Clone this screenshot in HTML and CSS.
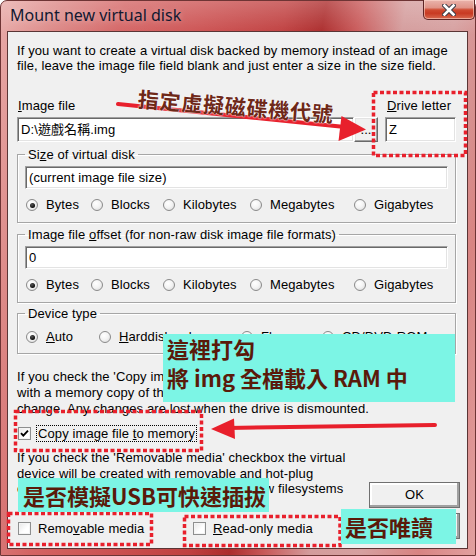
FILE: index.html
```html
<!DOCTYPE html>
<html>
<head>
<meta charset="utf-8">
<link rel="stylesheet" href="styles.css">
</head>
<body>
<div class="window">
  <div class="titlebar">
    <span class="title">Mount new virtual disk</span>
    <div class="close">
      <svg width="14" height="12" viewBox="0 0 14 12">
        <path d="M2.5 1.5 L11.5 10.5 M11.5 1.5 L2.5 10.5" stroke="#3c3c46" stroke-width="4.6" stroke-linecap="square" fill="none"/>
        <path d="M2.5 1.5 L11.5 10.5 M11.5 1.5 L2.5 10.5" stroke="#ffffff" stroke-width="2.6" stroke-linecap="square" fill="none"/>
      </svg>
    </div>
  </div>
  <div class="client">
    <p class="intro">If you want to create a virtual disk backed by memory instead of an image<br>file, leave the image file field blank and just enter a size in the size field.</p>

    <div class="file-row">
      <div class="file-col">
        <div class="lbl"><u>I</u>mage file</div>
        <div class="file-input">
          <div class="edit file-edit">D:\遊戲名稱.img</div>
          <div class="btn browse">...</div>
        </div>
      </div>
      <div class="drive-col">
        <div class="lbl drive-lbl"><u>D</u>rive letter</div>
        <div class="edit drive-edit">Z</div>
      </div>
    </div>

    <fieldset class="group size-group">
      <legend>Si<u>z</u>e of virtual disk</legend>
      <div class="edit wide">(current image file size)</div>
      <div class="radios units">
        <div class="radio on"><span class="dot"></span>Bytes</div>
        <div class="radio"><span class="dot"></span>Blocks</div>
        <div class="radio"><span class="dot"></span>Kilobytes</div>
        <div class="radio"><span class="dot"></span>Megabytes</div>
        <div class="radio"><span class="dot"></span>Gigabytes</div>
      </div>
    </fieldset>

    <fieldset class="group offset-group">
      <legend>Image file <u>o</u>ffset (for non-raw disk image file formats)</legend>
      <div class="edit wide">0</div>
      <div class="radios units">
        <div class="radio on"><span class="dot"></span>Bytes</div>
        <div class="radio"><span class="dot"></span>Blocks</div>
        <div class="radio"><span class="dot"></span>Kilobytes</div>
        <div class="radio"><span class="dot"></span>Megabytes</div>
        <div class="radio"><span class="dot"></span>Gigabytes</div>
      </div>
    </fieldset>

    <fieldset class="group device-group">
      <legend>Device type</legend>
      <div class="radios devices">
        <div class="radio on"><span class="dot"></span><span><u>A</u>uto</span></div>
        <div class="radio"><span class="dot"></span><span><u>H</u>arddisk volume</span></div>
        <div class="radio"><span class="dot"></span><span>Floppy</span></div>
        <div class="radio"><span class="dot"></span><span>CD/DVD-ROM</span></div>
      </div>
    </fieldset>

    <p class="note">If you check the 'Copy image file to memory' checkbox the drive is created<br>with a memory copy of the image file contents. The image file will not<br>change. Any changes are lost when the drive is dismounted.</p>

    <div class="check-row">
      <span class="box checked">
        <svg width="11" height="11" viewBox="0 0 11 11"><path d="M2 5.2 L4.3 7.6 L9 2.6" stroke="#000" stroke-width="1.9" fill="none"/></svg>
      </span>
      <span class="focus">Copy image file <u>t</u>o memory</span>
    </div>

    <div class="bottom">
      <div class="bottom-left">
        <p class="note2">If you check the 'Removable media' checkbox the virtual<br>device will be created with removable and hot-plug<br>characteristics that is required by some new filesystems</p>
        <div class="checks">
          <div class="check"><span class="box"></span><span>Remo<u>v</u>able media</span></div>
          <div class="check"><span class="box"></span><span><u>R</u>ead-only media</span></div>
        </div>
      </div>
      <div class="buttons">
        <div class="btn push">OK</div>
        <div class="btn push">Cancel</div>
      </div>
    </div>
  </div>

  <svg class="marks" width="476" height="556" viewBox="0 0 476 556">
    <g fill="none" stroke="#e8202c" stroke-width="3.5" stroke-dasharray="4 2.5">
      <rect x="373.5" y="92.5" width="92" height="63"/>
      <rect x="15.5" y="411.5" width="186" height="39"/>
      <rect x="8.5" y="513.5" width="143" height="31"/>
      <rect x="184.5" y="516.5" width="155.5" height="29"/>
    </g>
    <g stroke="#e8202c" stroke-width="4" stroke-linecap="round" fill="#e8202c">
      <line x1="118" y1="104" x2="345" y2="127"/>
      <polygon points="366,129.5 341.5,116 338.5,141" stroke="none"/>
      <line x1="435" y1="425" x2="228" y2="428"/>
      <polygon points="211,429 234,418.5 235,439" stroke="none"/>
    </g>
  </svg>

  <div class="note-top">指定虛擬磁碟機代號</div>
  <div class="tag tag-copy">這裡打勾<br>將 img 全檔載入 RAM 中</div>
  <div class="tag tag-usb">是否模擬USB可快速插拔</div>
  <div class="tag tag-ro">是否唯讀</div>
</div>
</body>
</html>
```

FILE: styles.css
```css
html, body {
  margin: 0;
  padding: 0;
}
body {
  width: 476px;
  height: 556px;
  overflow: hidden;
  font-family: "Liberation Sans", Arial, "Noto Sans CJK TC", sans-serif;
  font-size: 13px;
  letter-spacing: 0.1px;
  color: #000;
  background: #ffffff;
}
.window {
  position: relative;
  width: 476px;
  height: 556px;
  box-sizing: border-box;
  border: 1px solid #6e3434;
  border-radius: 7px 7px 0 0;
  padding: 0 7px 6px 6px;
  background:
    linear-gradient(to bottom, rgba(255,255,255,0.22), rgba(255,255,255,0) 34px),
    linear-gradient(100deg, #e8aaa8 0%, #dc8886 10%, #d46464 22%, #cc5252 36%, #c04040 50%, #ac2c2c 57%, #c85858 63%, #d49c9c 71%, #d6a0a0 80%, #d88482 90%, #e2a0a0 100%);
}
.titlebar {
  height: 30px;
  display: flex;
  align-items: flex-start;
  justify-content: space-between;
}
.title {
  font-family: "Noto Sans", "Liberation Sans", sans-serif;
  font-size: 16px;
  letter-spacing: 0;
  color: #121830;
  padding: 4px 0 0 3px;
  line-height: 20px;
  text-shadow: 0 0 6px rgba(255,255,255,0.35);
}
.close {
  width: 52px;
  height: 20px;
  margin-top: -1px;
  margin-right: -7px;
  box-sizing: border-box;
  border: 1px solid #5e2626;
  border-top: none;
  border-radius: 0 0 5px 5px;
  background: linear-gradient(to bottom, #eab4ac 0%, #e09488 40%, #cf4a30 52%, #c83a22 70%, #d86a50 100%);
  box-shadow: inset 0 0 0 1px rgba(255,220,210,0.55);
  display: flex;
  align-items: center;
  justify-content: center;
}
.client {
  height: 518px;
  box-sizing: border-box;
  background: #f0f0f0;
  border: 1px solid #5a3535;
  padding: 11px 11px 0 9px;
}
.intro {
  margin: 0;
  line-height: 15px;
  white-space: nowrap;
}
u {
  text-decoration: underline;
  text-underline-offset: 1px;
}
.file-row {
  display: flex;
  gap: 7px;
  margin-top: 25px;
}
.file-col {
  width: 361px;
}
.drive-col {
  width: 71px;
}
.lbl {
  line-height: 15px;
  padding-left: 1px;
}
.drive-lbl {
  padding-left: 2px;
}
.file-input {
  display: flex;
  margin-top: 4px;
}
.edit {
  box-sizing: border-box;
  height: 25px;
  background: #fff;
  border: 1px solid;
  border-color: #a0a0a0 #ffffff #ffffff #a0a0a0;
  box-shadow: inset 1px 1px 0 #696969, inset -1px -1px 0 #e3e3e3;
  padding: 0 3px;
  line-height: 23px;
  white-space: nowrap;
  overflow: hidden;
}
.file-edit {
  flex: 1;
}
.drive-edit {
  margin-top: 4px;
}
.btn {
  box-sizing: border-box;
  background: #f0f0f0;
  border: 1px solid;
  border-color: #ffffff #696969 #696969 #ffffff;
  box-shadow: inset -1px -1px 0 #a0a0a0, inset 1px 1px 0 #e3e3e3;
  text-align: center;
}
.browse {
  width: 24px;
  height: 25px;
  line-height: 23px;
}
.group {
  margin: 0;
  border: 1px solid #a6a6a6;
  box-shadow: inset 1px 1px 0 #fff, 1px 1px 0 #fff;
  padding: 4px 7px 9px 7px;
  min-width: 0;
}
.group legend {
  padding: 0 3px;
  line-height: 15px;
}
.size-group {
  margin-top: 5px;
}
.offset-group {
  margin-top: 4px;
}
.device-group {
  margin-top: 3px;
  padding: 8px 7px 8px 7px;
}
.wide {
  height: 23px;
  line-height: 21px;
}
.radios {
  display: grid;
  align-items: center;
  height: 16px;
  padding-left: 1px;
}
.units {
  margin-top: 8px;
  grid-template-columns: 65px 72px 87px 104px auto;
}
.devices {
  grid-template-columns: 73px 142px 81px auto;
}
.radio {
  display: flex;
  align-items: center;
  line-height: 16px;
  white-space: nowrap;
}
.dot {
  position: relative;
  flex: none;
  width: 12px;
  height: 12px;
  box-sizing: border-box;
  border-radius: 50%;
  border: 1px solid #8a8a8a;
  background: radial-gradient(circle at 40% 35%, #ffffff 0%, #f4f4f4 45%, #d8d8d8 100%);
  margin-right: 8px;
}
.radio.on .dot::after {
  content: "";
  position: absolute;
  left: 2.5px;
  top: 2.5px;
  width: 5px;
  height: 5px;
  border-radius: 50%;
  background: radial-gradient(circle at 40% 35%, #555 0%, #0a0a0a 70%);
}
.note {
  margin: 15px 0 0 0;
  line-height: 16px;
  white-space: nowrap;
}
.check-row {
  display: flex;
  align-items: center;
  height: 18px;
  margin-top: 7px;
  padding-left: 1px;
}
.box {
  flex: none;
  width: 13px;
  height: 13px;
  box-sizing: border-box;
  border: 1px solid #8e8f8f;
  background: linear-gradient(135deg, #e6e6e6, #ffffff 60%);
  box-shadow: inset 0 0 0 1px #f4f4f4;
  margin-right: 5px;
  display: flex;
  align-items: center;
  justify-content: center;
}
.focus {
  outline: 1px dotted #000;
  padding: 0 1px;
  margin-left: 1px;
  line-height: 15px;
}
.bottom {
  display: flex;
  justify-content: space-between;
  margin-top: 8px;
}
.bottom-left {
  flex: 1;
}
.note2 {
  margin: 0;
  line-height: 15.5px;
  white-space: nowrap;
  overflow: hidden;
  width: 345px;
}
.checks {
  display: grid;
  grid-template-columns: 175px auto;
  height: 18px;
  align-items: center;
  margin-top: 23px;
  padding-left: 1px;
}
.check {
  display: flex;
  align-items: center;
}
.check .box {
  margin-right: 7px;
}
.buttons {
  width: 91px;
  margin-right: -4px;
  padding-top: 32px;
  display: flex;
  flex-direction: column;
  gap: 5px;
}
.push {
  height: 26px;
  line-height: 24px;
  border-color: #ffffff #3c3c3c #3c3c3c #ffffff;
  outline: 1px solid #707070;
  outline-offset: -1px;
  box-shadow: inset -2px -2px 0 #a0a0a0, inset 2px 2px 0 #ffffff;
}

/* annotations drawn on top of the screenshot */
.marks {
  position: absolute;
  left: -1px;
  top: -1px;
  pointer-events: none;
}
.note-top {
  position: absolute;
  left: 137px;
  top: 84px;
  font-family: "Noto Sans CJK TC", "Noto Sans CJK SC", sans-serif;
  font-weight: 700;
  font-size: 21px;
  line-height: 26px;
  color: #6e2818;
  letter-spacing: 0.8px;
  transform: rotate(4.5deg);
  transform-origin: 0 50%;
  text-shadow: 0 0 2px #ffffff, 0 0 1px #ffffff;
  white-space: nowrap;
}
.tag {
  position: absolute;
  background: #7cf5e5;
  color: #5a1a0a;
  font-family: "Noto Sans CJK TC", "Noto Sans CJK SC", sans-serif;
  font-weight: 700;
  font-size: 22px;
  letter-spacing: 0;
  white-space: nowrap;
  box-sizing: border-box;
}
.tag-copy {
  left: 162px;
  top: 333px;
  width: 292px;
  height: 68px;
  padding: 0 0 0 4px;
  line-height: 29px;
}
.tag-usb {
  left: 17px;
  top: 477px;
  width: 251px;
  height: 34px;
  padding-left: 5px;
  line-height: 34px;
}
.tag-ro {
  left: 340px;
  top: 508px;
  width: 115px;
  height: 35px;
  padding-left: 4px;
  line-height: 35px;
}
```
